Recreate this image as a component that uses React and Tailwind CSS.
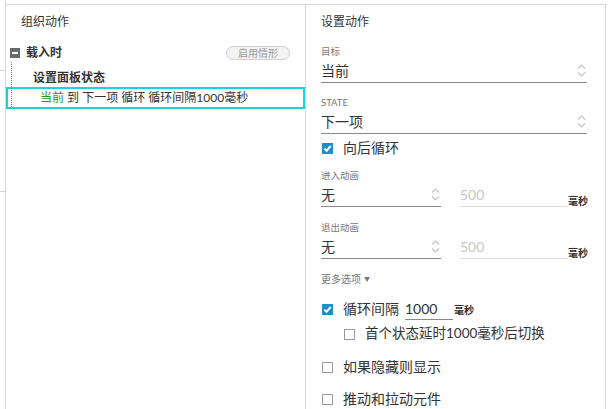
import React from "react"

const font = { fontFamily: "Lato, 'Noto Sans CJK SC', sans-serif" }

function UpDown() {
  return (
    <svg width="9" height="13" viewBox="0 0 9 13" fill="none" stroke="#c4c4c4" strokeWidth="1.1">
      <path d="M1 4.5 L4.5 1 L8 4.5" />
      <path d="M1 8.5 L4.5 12 L8 8.5" />
    </svg>
  )
}

function Check({ on }) {
  if (!on) return <span className="w-[11px] h-[11px] border border-[#9a9a9a] bg-white shrink-0" />
  return (
    <span className="w-[11px] h-[11px] bg-[#1f8dcc] shrink-0 flex items-center justify-center">
      <svg width="9" height="9" viewBox="0 0 9 9" fill="none" stroke="#fff" strokeWidth="2">
        <path d="M1.3 4.6 L3.6 6.8 L7.7 2" />
      </svg>
    </span>
  )
}

function Label({ children, className = "" }) {
  return <div className={`h-[12px] flex items-center text-[9.5px] text-[#777] leading-none ${className}`}>{children}</div>
}

function AnimRow({ label, mt }) {
  return (
    <>
      <Label className={mt}>{label}</Label>
      <div className="mt-[1px] h-[24px] flex">
        <div className="w-[120px] border-b border-[#888] flex items-center justify-between pr-[1px]">
          <span className="text-[14px] text-[#333] leading-none">无</span>
          <UpDown />
        </div>
        <div className="ml-[19px] w-[108px] border-b border-[#dcdcdc] flex items-center">
          <span className="text-[14px] text-[#c8c8c8] leading-none">500</span>
        </div>
        <span className="self-end mb-[1px] text-[10px] font-bold text-[#333] leading-none">毫秒</span>
      </div>
    </>
  )
}

export default function App() {
  return (
    <div className="w-[612px] h-[409px] bg-white flex overflow-hidden" style={font}>
      <div className="w-[6px] h-full border-r border-[#d6d6d6] flex flex-col">
        <div className="h-[70px]" />
        <div className="h-[121px] border-t border-[#d6d6d6]" />
        <div className="border-t border-[#d6d6d6]" />
      </div>

      <div className="w-[600px] mt-[4px] border-t border-r border-[#d6d6d6] flex">
        {/* left panel */}
        <div className="w-[300px] border-r border-[#d6d6d6] flex flex-col relative">
          <div className="h-[34px] flex items-center pl-[15px] text-[12px] text-[#333] leading-none">组织动作</div>
          <div className="mt-[5px] h-[18px] flex items-center pl-[4px] pr-[15px]">
            <span className="w-[10px] h-[10px] bg-[#6a6a6a] flex items-center justify-center">
              <span className="w-[6px] h-[2px] bg-white" />
            </span>
            <span className="ml-[6px] text-[12px] font-bold text-[#333] leading-none">载入时</span>
            <span className="ml-auto w-[64px] h-[14px] rounded-full border border-[#cfcfcf] bg-[#f3f3f3] flex items-center justify-center text-[10px] text-[#999] leading-none">
              启用情形
            </span>
          </div>
          <div className="absolute left-[5px] top-[57px] h-[45px] border-l border-dotted border-[#777]" />
          <div className="mt-[7px] h-[18px] flex items-center pl-[27px] text-[12px] font-bold text-[#333] leading-none">设置面板状态</div>
          <div className="h-[22px] border-2 border-[#1cd3d8] flex items-center pl-[32px] text-[12px] text-[#333] leading-none">
            <span className="text-[#1c9a1c]">当前</span>
            <span>&nbsp;到 下一项 循环 循环间隔1000毫秒</span>
          </div>
        </div>

        {/* right panel */}
        <div className="flex-1 flex flex-col pl-[15px]">
          <div className="h-[34px] flex items-center text-[12px] text-[#333] leading-none">设置动作</div>
          <Label className="mt-[7px]">目标</Label>
          <div className="mt-[1px] w-[266px] h-[24px] border-b border-[#888] flex items-center justify-between pr-[1px]">
            <span className="text-[14px] text-[#333] leading-none">当前</span>
            <UpDown />
          </div>
          <Label className="mt-[14px]">STATE</Label>
          <div className="mt-[1px] w-[266px] h-[24px] border-b border-[#888] flex items-center justify-between pr-[1px]">
            <span className="text-[14px] text-[#333] leading-none">下一项</span>
            <UpDown />
          </div>
          <div className="mt-[4px] h-[20px] flex items-center pl-[1px] gap-[10px]">
            <Check on />
            <span className="text-[14px] text-[#333] leading-none">向后循环</span>
          </div>

          <AnimRow label="进入动画" mt="mt-[12px]" />
          <AnimRow label="退出动画" mt="mt-[15px]" />

          <div className="mt-[14px] h-[12px] flex items-center text-[10px] text-[#777] leading-none">
            更多选项<span className="ml-[3px] text-[6px]">▼</span>
          </div>

          <div className="mt-[13px] h-[22px] flex items-center pl-[1px]">
            <Check on />
            <span className="ml-[10px] text-[14px] text-[#333] leading-none">循环间隔</span>
            <span className="ml-[6px] w-[48px] h-[22px] border-b border-[#888] flex items-center text-[14px] text-[#333] leading-none">1000</span>
            <span className="self-end mb-[5px] ml-[1px] text-[10px] font-bold text-[#333] leading-none">毫秒</span>
          </div>
          <div className="mt-[4px] h-[20px] flex items-center pl-[23px]">
            <Check />
            <span className="ml-[10px] text-[13.5px] text-[#333] leading-none">首个状态延时1000毫秒后切换</span>
          </div>
          <div className="mt-[13px] h-[20px] flex items-center pl-[1px]">
            <Check />
            <span className="ml-[10px] text-[14px] text-[#333] leading-none">如果隐藏则显示</span>
          </div>
          <div className="mt-[12px] h-[20px] flex items-center pl-[1px]">
            <Check />
            <span className="ml-[10px] text-[14px] text-[#333] leading-none">推动和拉动元件</span>
          </div>
        </div>
      </div>
    </div>
  )
}
